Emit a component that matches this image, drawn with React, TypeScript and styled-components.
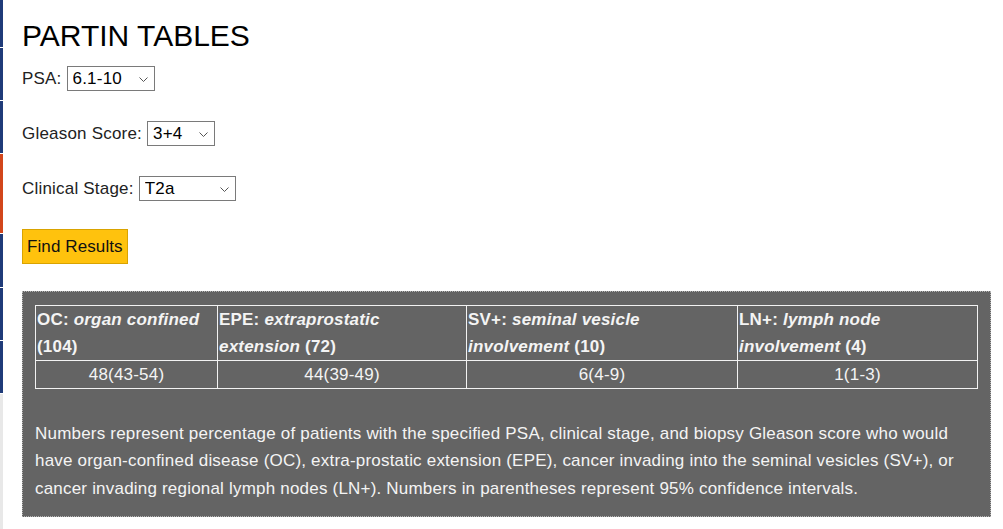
import React from 'react';
import styled, { createGlobalStyle } from 'styled-components';

const GlobalStyle = createGlobalStyle`
  html, body {
    margin: 0;
    padding: 0;
    background: #ffffff;
    font-family: 'Liberation Sans', Arial, sans-serif;
  }
`;

const Page = styled.div`
  display: flex;
  min-height: 100vh;
`;

const SideStrip = styled.nav`
  width: 3px;
  display: flex;
  flex-direction: column;
  gap: 1px;
  background: #ffffff;
  flex-shrink: 0;
`;

const StripItem = styled.div<{ $h: number; $active?: boolean }>`
  height: ${({ $h }) => $h}px;
  background: ${({ $active }) => ($active ? '#d2461b' : '#1f3b79')};
`;

const StripTail = styled.div`
  flex: 1;
  background: #e8e8e8;
`;

const Main = styled.main`
  flex: 1;
  padding: 19px 12px 12px 19px;
  color: #111;
  letter-spacing: 0.2px;
`;

const Title = styled.h1`
  margin: 0 0 13px;
  font-size: 30px;
  line-height: 34px;
  font-weight: 400;
  letter-spacing: 0;
  color: #000;
`;

const Form = styled.div`
  display: flex;
  flex-direction: column;
  gap: 30px;
  align-items: flex-start;
`;

const Field = styled.label`
  display: flex;
  align-items: center;
  gap: 5px;
  height: 25px;
  font-size: 17px;
  line-height: 20px;
  color: #222;
`;

const SelectWrap = styled.span`
  position: relative;
  display: inline-block;
`;

const Select = styled.select<{ $w: number }>`
  appearance: none;
  -webkit-appearance: none;
  width: ${({ $w }) => $w}px;
  height: 25px;
  box-sizing: border-box;
  border: 1px solid #7a7a7a;
  border-radius: 0;
  background: #fff;
  padding: 0 20px 0 5px;
  font-family: 'Liberation Sans', Arial, sans-serif;
  font-size: 17px;
  letter-spacing: 0.2px;
  color: #000;
`;

const Chevron = styled.svg`
  position: absolute;
  right: 7px;
  top: 11px;
  pointer-events: none;
`;

const FindButton = styled.button`
  margin-top: -2px;
  height: 35px;
  padding: 0 4px;
  border: 1px solid #d9a300;
  background: #ffc20d;
  font-family: 'Liberation Sans', Arial, sans-serif;
  font-size: 17px;
  letter-spacing: 0.1px;
  color: #111;
  cursor: pointer;
`;

const Panel = styled.section`
  margin-top: 27px;
  background: #646464;
  border: 1px dotted #b5b5b5;
  padding: 13px 12px 14px;
  color: #f4f4f4;
`;

const Table = styled.table`
  width: 942px;
  table-layout: fixed;
  border-collapse: collapse;
  font-size: 17px;
  line-height: 27px;
`;

const HeadCell = styled.th`
  border: 1px solid #f2f2f2;
  padding: 0 8px 0 1px;
  text-align: left;
  vertical-align: top;
  font-weight: 700;
`;

const Cell = styled.td`
  border: 1px solid #f2f2f2;
  padding: 0 1px;
  text-align: center;
`;

const Note = styled.p`
  margin: 31px 0 0;
  font-size: 17px;
  line-height: 27.4px;
`;

const strip = [
  { h: 47 },
  { h: 52 },
  { h: 52 },
  { h: 79, active: true },
  { h: 53 },
  { h: 52 },
  { h: 52 },
];

const columns = [
  { w: 182, code: 'OC:', name: 'organ confined', n: '(104)', value: '48(43-54)' },
  { w: 249, code: 'EPE:', name: 'extraprostatic extension', n: '(72)', value: '44(39-49)' },
  { w: 271, code: 'SV+:', name: 'seminal vesicle involvement', n: '(10)', value: '6(4-9)' },
  { w: 240, code: 'LN+:', name: 'lymph node involvement', n: '(4)', value: '1(1-3)' },
];

function Dropdown({ width, value, options }: { width: number; value: string; options: string[] }) {
  return (
    <SelectWrap>
      <Select $w={width} defaultValue={value}>
        {options.map((o) => (
          <option key={o}>{o}</option>
        ))}
      </Select>
      <Chevron width="9" height="5" viewBox="0 0 9 5">
        <path d="M0.5 0.5 L4.5 4.5 L8.5 0.5" fill="none" stroke="#555" strokeWidth="1" />
      </Chevron>
    </SelectWrap>
  );
}

function App() {
  return (
    <Page>
      <GlobalStyle />
      <SideStrip>
        {strip.map((s, i) => (
          <StripItem key={i} $h={s.h} $active={s.active} />
        ))}
        <StripTail />
      </SideStrip>
      <Main>
        <Title>PARTIN TABLES</Title>
        <Form>
          <Field>
            PSA:
            <Dropdown width={88} value="6.1-10" options={['0-2.5', '2.6-4', '4.1-6', '6.1-10', '>10']} />
          </Field>
          <Field>
            Gleason Score:
            <Dropdown width={68} value="3+4" options={['6', '3+4', '4+3', '8', '9-10']} />
          </Field>
          <Field>
            Clinical Stage:
            <Dropdown width={97} value="T2a" options={['T1c', 'T2a', 'T2b', 'T2c']} />
          </Field>
          <FindButton>Find Results</FindButton>
        </Form>
        <Panel>
          <Table>
            <colgroup>
              {columns.map((c) => (
                <col key={c.code} style={{ width: c.w }} />
              ))}
            </colgroup>
            <thead>
              <tr>
                {columns.map((c) => (
                  <HeadCell key={c.code}>
                    {c.code} <em>{c.name}</em> {c.n}
                  </HeadCell>
                ))}
              </tr>
            </thead>
            <tbody>
              <tr>
                {columns.map((c) => (
                  <Cell key={c.code}>{c.value}</Cell>
                ))}
              </tr>
            </tbody>
          </Table>
          <Note>
            Numbers represent percentage of patients with the specified PSA, clinical stage, and biopsy Gleason score
            who would have organ-confined disease (OC), extra-prostatic extension (EPE), cancer invading into the
            seminal vesicles (SV+), or cancer invading regional lymph nodes (LN+). Numbers in parentheses represent 95%
            confidence intervals.
          </Note>
        </Panel>
      </Main>
    </Page>
  );
}

export default App;
